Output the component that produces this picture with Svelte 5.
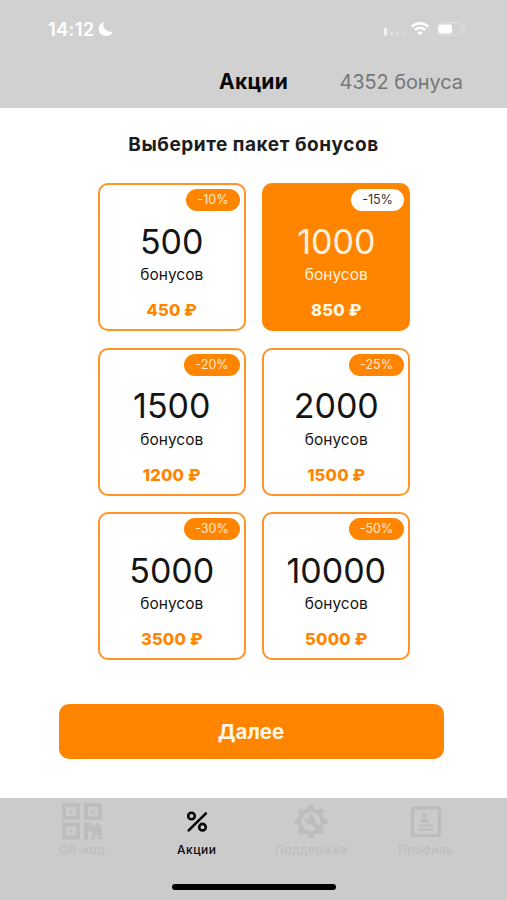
<script>
  const packs = [
    { off: '-10%', amount: '500', price: '450 ₽', badge: 53.5 },
    { off: '-15%', amount: '1000', price: '850 ₽', badge: 53.5, active: true },
    { off: '-20%', amount: '1500', price: '1200 ₽', badge: 55.5 },
    { off: '-25%', amount: '2000', price: '1500 ₽', badge: 55.5 },
    { off: '-30%', amount: '5000', price: '3500 ₽', badge: 55.5 },
    { off: '-50%', amount: '10000', price: '5000 ₽', badge: 55.5 },
  ];
  const teeth = [0, 45, 90, 135, 180, 225, 270, 315];
</script>

<div class="screen">
  <header>
    <div class="status">
      <div class="clock">
        <span>14:12</span>
        <svg width="16" height="16" viewBox="0 0 16 16"><path d="M6.200.8C2.800 1.900.7 4.700.7 8c0 4 3.200 7 7.200 7 3.200 0 6-1.700 7.300-4.600-1.500.5-2.900.5-4.200 0C7.300 9.500 5 6.500 5.300 3.600c.1-1 .4-2 .9-2.800z" fill="#fff" /></svg>
      </div>
      <div class="signals">
        <svg width="84" height="16" viewBox="0 0 84 16">
          <rect x="0" y="6.500" width="3" height="8" rx="1" fill="#f2f2f2" />
          <rect x="6" y="10.500" width="3" height="4" rx="1" fill="#dedede" />
          <rect x="12" y="10.500" width="3" height="4" rx="1" fill="#dcdcdc" />
          <rect x="18" y="10.500" width="2" height="4" rx="1" fill="#dcdcdc" />
          <g fill="none" stroke="#fff" stroke-width="2.600">
            <path d="M27.900 5.500c4.700-4.300 11.700-4.300 16.400 0" />
            <path d="M31 9c3-2.700 7.200-2.700 10.200 0" />
          </g>
          <path d="M33.400 11.400c1.600-1.300 3.800-1.300 5.400 0L36.100 14.200z" fill="#fff" />
          <rect x="53.500" y="2" width="24.500" height="12" rx="3.500" fill="none" stroke="#e0e0e0" />
          <rect x="54.500" y="3.500" width="13.500" height="9" rx="2" fill="#fff" />
          <path d="M79.500 6c2 .8 2 3.200 0 4z" fill="#e5e5e5" />
        </svg>
      </div>
    </div>
    <div class="bar">
      <h1>Акции</h1>
      <span class="balance">4352 бонуса</span>
    </div>
  </header>

  <main>
    <h2>Выберите пакет бонусов</h2>
    <div class="grid">
      {#each packs as p}
        <article class:active={p.active}>
          <span class="badge" style="width: {p.badge}px">{p.off}</span>
          <strong>{p.amount}</strong>
          <span class="unit">бонусов</span>
          <b>{p.price}</b>
        </article>
      {/each}
    </div>
    <button>Далее</button>
  </main>

  <footer>
    <nav>
      <div class="tab qr">
        <svg width="42" height="38" viewBox="0 0 42 38">
          <g fill="none" stroke="#bdbdbd" stroke-width="4">
            <rect x="3" y="3" width="14" height="13" />
            <rect x="25" y="3" width="14" height="13" />
            <rect x="3" y="22.500" width="14" height="13" />
          </g>
          <g fill="#bdbdbd">
            <rect x="8.500" y="8" width="3" height="3" /><rect x="30.500" y="8" width="3" height="3" /><rect x="8.500" y="27.500" width="3" height="3" />
            <path d="M23 20.500h7v3h5v-3h3v3h3v10H31v-4h-4v8h-4z" />
            <rect x="30" y="34.500" width="4" height="3" /><rect x="37" y="34.500" width="4" height="3" />
          </g>
        </svg>
        <span>QR-код</span>
      </div>
      <div class="tab on">
        <svg width="42" height="38" viewBox="0 0 42 38">
          <g fill="none" stroke="#050505" stroke-width="2.600" stroke-linecap="round">
            <circle cx="15.500" cy="14" r="3.300" /><circle cx="26.500" cy="25.200" r="3.300" /><path d="M29.900 11.300 12.700 28.400" />
          </g>
        </svg>
        <span>Акции</span>
      </div>
      <div class="tab help">
        <svg width="42" height="38" viewBox="0 0 42 38">
          <g transform="translate(21 19.500)">
            <circle r="11.500" fill="none" stroke="#bdbdbd" stroke-width="3.600" />
            {#each teeth as a}<path transform="rotate({a})" d="M-3.500-12-2.200-16.500h4.400L3.500-12z" fill="#bdbdbd" />{/each}
            <path d="M-6-4.500-3-2-.6-4-3-7C1-8 5-4.500 3.500-.5L9 5 6 8 .3 2.700C-3.500 4-7-.5-6-4.500z" fill="#bdbdbd" />
          </g>
        </svg>
        <span>Поддержка</span>
      </div>
      <div class="tab profile">
        <svg width="42" height="38" viewBox="0 0 42 38">
          <rect x="7.500" y="6" width="27" height="27.500" rx="1" fill="none" stroke="#bcbcbc" stroke-width="3.200" />
          <g fill="#bcbcbc">
            <circle cx="19.500" cy="13.500" r="2.300" /><path d="M15 20.500V19c1.500-3 7.500-3 9 0v1.500z" />
            <rect x="14" y="22.500" width="14" height="2" /><rect x="14" y="26.500" width="14" height="2" />
          </g>
        </svg>
        <span>Профиль</span>
      </div>
    </nav>
    <div class="home"></div>
  </footer>
</div>

<style>
  :global(body) { margin: 0; background: #fff; }
  .screen { width: 507px; height: 900px; display: flex; flex-direction: column; overflow: hidden; font-family: Inter, "Liberation Sans", sans-serif; background: #fff; color: #151515; }
  header { height: 108px; flex: none; background: #d1d1d1; }
  .status { height: 58px; box-sizing: border-box; padding: 21px 40px 0 48px; display: flex; justify-content: space-between; }
  .clock { display: flex; gap: 4px; height: 16px; align-items: center; color: #fff; font-size: 18.500px; font-weight: 600; letter-spacing: 0.200px; }
  .signals { width: 83px; height: 16px; }
  svg { display: block; flex: none; }
  .bar { height: 47px; display: grid; grid-template-columns: 1fr auto 1fr; align-items: center; padding: 0 44px 0 44px; }
  h1 { grid-column: 2; margin: 0; font-size: 21px; font-weight: 700; letter-spacing: 0.200px; color: #080808; white-space: nowrap; }
  .balance { justify-self: end; font-size: 20px; letter-spacing: -0.100px; color: #777; white-space: nowrap; }
  main { height: 690px; flex: none; display: flex; flex-direction: column; align-items: center; }
  h2 { margin: 25px 0 0; height: 24px; line-height: 24px; font-size: 19px; letter-spacing: 0.540px; font-weight: 700; white-space: nowrap; color: #1c1c1e; }
  .grid { display: grid; grid-template-columns: 148px 148px; grid-auto-rows: 148px; gap: 16.500px 16.500px; margin: 26px 0 0 1px; }
  article { box-sizing: border-box; border: 2px solid #ff9328; border-radius: 10px; padding-top: 4px; display: flex; flex-direction: column; align-items: center; white-space: nowrap; }
  .badge { align-self: flex-end; margin-right: 4px; height: 22px; line-height: 22px; border-radius: 11px; background: #ff8500; color: #ffe9cf; font-size: 12.500px; text-align: center; }
  strong { margin-top: 10.500px; height: 40px; line-height: 40px; font-size: 34px; font-weight: 400; }
  .unit { margin-top: 3.500px; height: 20px; line-height: 20px; font-size: 15.500px; }
  b { margin-top: 15px; height: 20px; line-height: 20px; font-size: 16.500px; letter-spacing: 0.200px; font-weight: 800; color: #ff8500; }
  .active { background: #ff8500; border-color: #ff8500; color: #fff3df; }
  .active b { color: #fff8e8; }
  .active .badge { background: #fff; color: #333; }
  button { margin: 44px 5px 0 0; width: 385px; height: 55px; border: 0; border-radius: 10px; padding: 0; background: #ff8500; color: #fff6e6; font: 700 20.500px Inter, "Liberation Sans", sans-serif; }
  footer { height: 102px; flex: none; background: #cbcbcb; }
  nav { height: 86px; box-sizing: border-box; padding: 4px 25px 0; display: grid; grid-template-columns: repeat(4, 114.500px); }
  .tab { display: flex; flex-direction: column; align-items: center; font-size: 12px; letter-spacing: 0.450px; line-height: 16px; color: #bcbcbc; }
  .tab span { margin-top: 1.500px; white-space: nowrap; }
  .tab.on { color: #080808; font-weight: 500; }
  .home { width: 164px; height: 6px; border-radius: 3px; background: #000; margin: 0 auto; }
</style>
